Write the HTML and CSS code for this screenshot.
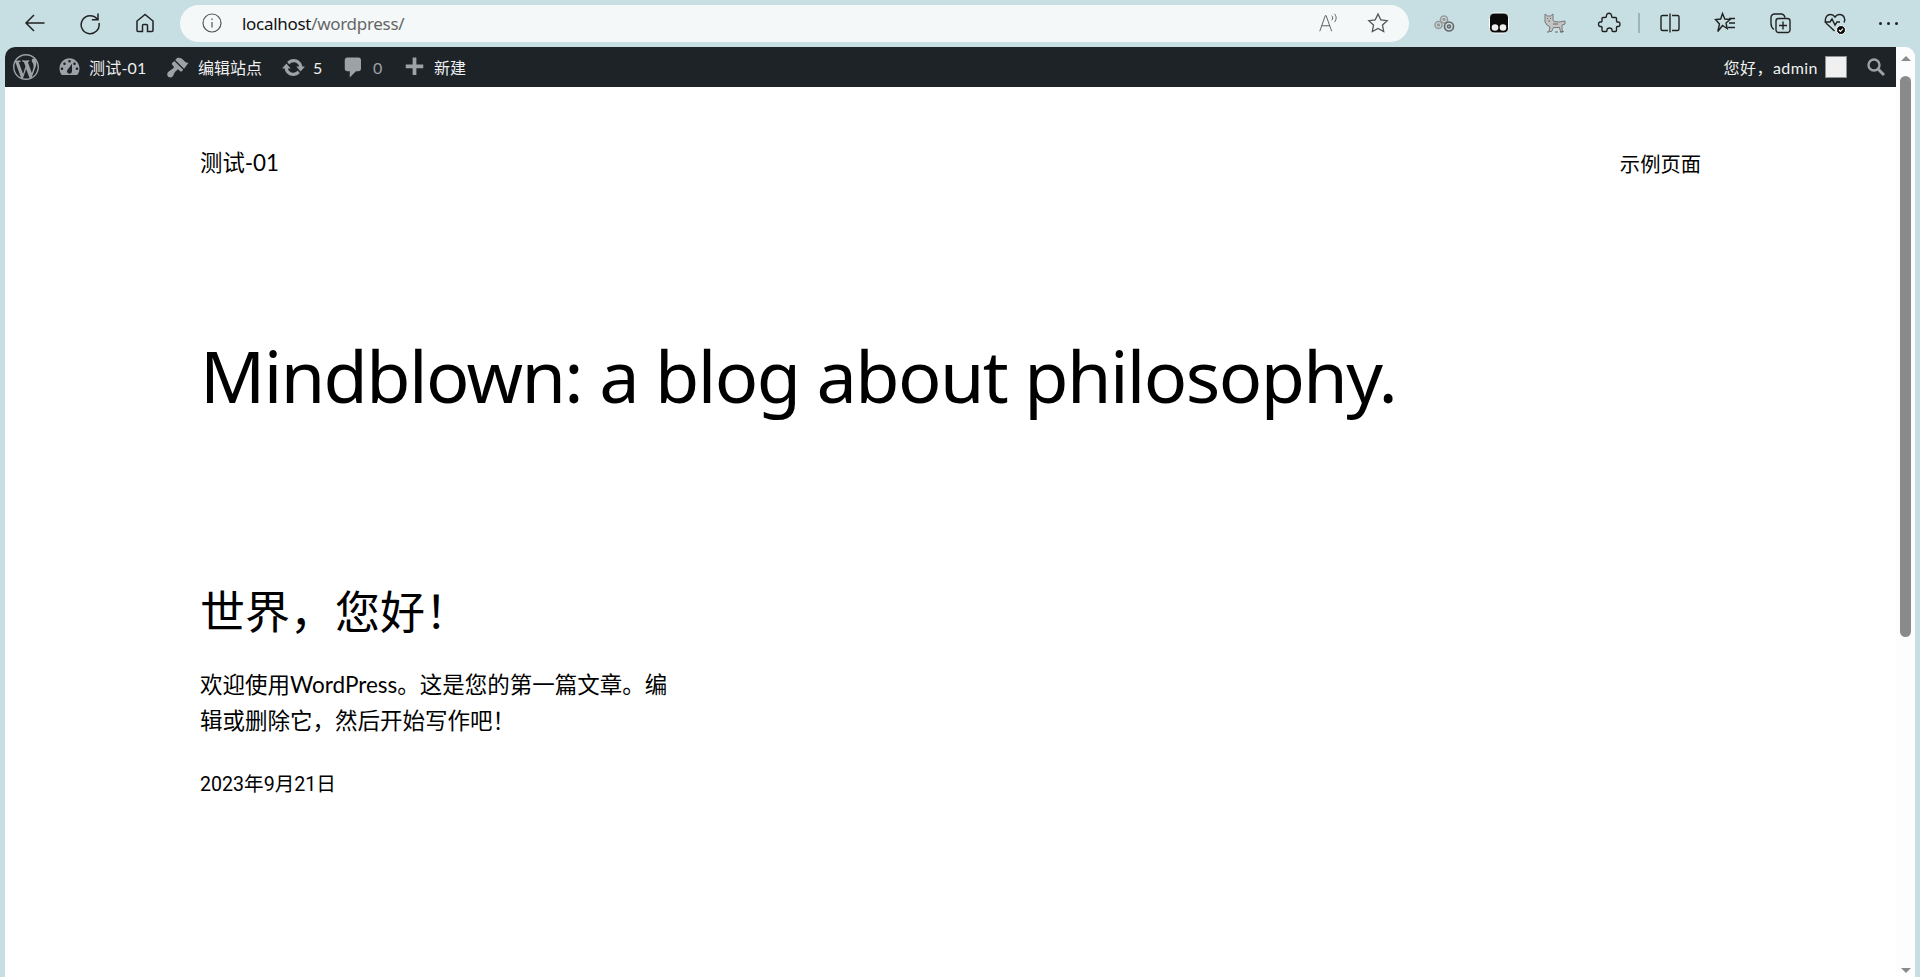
FILE: index.html
```html
<!DOCTYPE html>
<html lang="zh-CN">
<head>
<meta charset="utf-8">
<title>测试-01</title>
<link rel="stylesheet" href="styles.css">
</head>
<body>
<div class="chrome">
  <div class="nav">
    <svg class="ic nav-back" viewBox="0 0 24 24"><path d="M21.500 12H3M11 4l-8 8 8 8"/></svg>
    <svg class="ic nav-reload" viewBox="0 0 24 24"><path d="M19.500 8.500A9 9 0 1 0 21 12M20 2.500v6.200h-6.200"/></svg>
    <svg class="ic nav-home" viewBox="0 0 24 24"><path d="M12 3.500 4 10v9.500a1 1 0 0 0 1 1h4.500v-6a1 1 0 0 1 1-1h3a1 1 0 0 1 1 1v6H19a1 1 0 0 0 1-1V10z"/></svg>
  </div>
  <div class="address">
    <svg class="ic-info" viewBox="0 0 20 20"><circle cx="10" cy="10" r="9"/><path d="M10 9v5.500M10 5.500v1.500"/></svg>
    <div class="url">localhost<span class="url-path">/wordpress/</span></div>
    <svg class="ic-small read" viewBox="0 0 24 24"><path d="M3 21 9 4h1l6 17M5 15h9M16 4c1.500 1.500 1.500 3.500 0 5M19 2c2.500 2.500 2.500 6.500 0 9"/></svg>
    <svg class="ic-small" viewBox="0 0 24 24"><path d="m12 3 2.800 5.900 6.400.8-4.700 4.400 1.200 6.400-5.700-3.100-5.700 3.100 1.200-6.400-4.700-4.400 6.400-.8z"/></svg>
  </div>
  <div class="tools">
    <svg class="tool" viewBox="0 0 24 24"><g class="t-grey"><circle cx="6.500" cy="14" r="3.500"/><circle cx="12" cy="8.500" r="3.500"/><circle cx="12" cy="8.500" r="1" /><circle cx="6.500" cy="14" r="1"/></g><circle cx="17" cy="15.500" r="4.500" class="t-dark"/><circle cx="17" cy="15.500" r="1.500" class="t-dark"/></svg>
    <svg class="tool" viewBox="0 0 24 24"><rect x="2.500" y="2" width="19" height="20" rx="4.500" class="t-black"/><circle cx="8" cy="16.500" r="3.300" class="t-white"/><circle cx="16" cy="16.500" r="3.300" class="t-white"/></svg>
    <svg class="tool" viewBox="0 0 24 24"><path class="t-cat" d="M3 3l2.500 2h3L11 3v6l1 1.500 5 .5 6-1v3l-3 1v5l1.500 1.500h-3l-1-4h-6l-2 4H7l1-4.500-3-2-2-3z"/><path class="t-catline" d="M5 7.500h1M8 7.500h1M6 10h2M11 13h5M5 21h2M13 21h3M18 21h3"/></svg>
    <svg class="tool" viewBox="0 0 24 24"><path class="t-line" d="M9.500 5c-.5-3.700 5.500-3.700 5 0 0 .8.500 1.500 1.500 1.500h2.500c.8 0 1 .6 1 1V10c0 .8.700 1.200 1.300 1 2.900-.8 2.900 5.300 0 4.500-.6-.200-1.300.200-1.300 1v2.500c0 .4-.2 1.500-1 1.500H16c-.8 0-1.200-.700-1-1.300.8-2.900-5.800-2.900-5 0 .2.600-.2 1.300-1 1.300H6c-.8 0-1-.6-1-1.500v-2.500c0-.800-.7-1.200-1.300-1-2.900.8-2.900-5.300 0-4.500.6.200 1.300-.2 1.300-1V7.500c0-.4.200-1 1-1h2c.8 0 1.500-.5 1.500-1.500z"/></svg>
    <span class="tool-sep"></span>
    <svg class="tool" viewBox="0 0 24 24"><path class="t-line" d="M10 4.500H4.500a1.500 1.500 0 0 0-1.500 1.500v12a1.500 1.500 0 0 0 1.500 1.500H10M14 4.500h5.500A1.500 1.500 0 0 1 21 6v12a1.500 1.500 0 0 1-1.500 1.500H14M12 2.500v19"/></svg>
    <svg class="tool" viewBox="0 0 24 24"><path class="t-line" d="m9.500 2.500 2.300 5.500 5.200.5-4 3.500 1.200 5.500-4.700-3-4.700 6 1.700-7.500-4-4.500 5.200-.5zM16 7.500h6M16 12h6M15 16.500h7"/></svg>
    <svg class="tool" viewBox="0 0 24 24"><path class="t-line" d="M6 18.500c-1.500-1-3-3.500-3-6V6.500A3.500 3.500 0 0 1 6.500 3H13c2 0 3.500 1.500 4 3.500M10.500 7.500h9A2.500 2.500 0 0 1 22 10v9a2.500 2.500 0 0 1-2.500 2.500h-9A2.500 2.500 0 0 1 8 19v-9a2.500 2.500 0 0 1 2.500-2.500zM15 10.500v8M11 14.500h8"/></svg>
    <svg class="tool" viewBox="0 0 24 24"><path class="t-line" d="M11.500 20 4 13C.5 9.500 3 3.500 7.500 3.500c2 0 3.500 1 4.500 2.500 1-1.500 2.500-2.500 4.500-2.500 4.500 0 6.500 5 4.500 8M1.500 11H7l2-3 3 6 2-3h3"/><circle cx="18" cy="19" r="4.500" class="t-black"/><path class="t-check" d="m16 19 1.500 1.500 2.500-2.800"/></svg>
    <div class="more"><i></i><i></i><i></i></div>
  </div>
</div>

<div class="window">
  <div class="viewport">
    <div class="adminbar">
      <div class="ab-left">
        <div class="ab-item ab-wp">
          <svg class="wp" viewBox="0 0 20 20"><path d="M20 10c0-5.510-4.490-10-10-10C4.480 0 0 4.490 0 10c0 5.520 4.480 10 10 10 5.510 0 10-4.480 10-10zM7.780 15.370L4.370 6.220c.55-.02 1.170-.08 1.170-.08.5-.06.44-1.130-.06-1.110 0 0-1.450.11-2.370.11-.18 0-.37 0-.58-.01C4.120 2.690 6.870 1.110 10 1.110c2.330 0 4.450.87 6.050 2.340-.68-.11-1.650.39-1.650 1.580 0 .74.45 1.360.9 2.100.35.61.55 1.360.55 2.460 0 1.490-1.400 5-1.400 5l-3.030-8.370c.54-.02.82-.17.82-.17.5-.05.44-1.250-.06-1.220 0 0-1.440.12-2.380.12-.87 0-2.330-.12-2.330-.12-.5-.03-.56 1.200-.06 1.220l.92.08 1.260 3.410zM17.410 10c.24-.64.74-1.870.43-4.250.7 1.290 1.050 2.710 1.050 4.250 0 3.290-1.730 6.240-4.400 7.780.97-2.590 1.940-5.200 2.920-7.780zM6.100 18.090C3.120 16.640 1.110 13.530 1.110 10c0-1.300.23-2.480.72-3.590C3.250 10.300 4.670 14.200 6.100 18.090zm4.030-6.630l2.580 6.980c-.86.29-1.760.45-2.710.45-.79 0-1.570-.11-2.290-.33.81-2.380 1.620-4.740 2.420-7.100z"/></svg>
        </div>
        <div class="ab-item ab-site">
          <svg class="ab-ic" viewBox="0 0 20 20"><path fill-rule="evenodd" d="M3.760 16h12.480c1.100-1.430 1.760-3.210 1.760-5.150C18 6.040 14.410 2.500 10 2.500S2 6.040 2 10.850c0 1.940.66 3.720 1.760 5.150zM10 4c.55 0 1 .45 1 1s-.45 1-1 1-1-.45-1-1 .45-1 1-1zM6 6c.55 0 1 .45 1 1s-.45 1-1 1-1-.45-1-1 .45-1 1-1zm8 0c.55 0 1 .45 1 1s-.45 1-1 1-1-.45-1-1 .45-1 1-1zm-5.370 5.550L12 7v6c0 1.100-.9 2-2 2s-2-.9-2-2c0-.57.25-1.080.63-1.450zM4 10c.55 0 1 .45 1 1s-.45 1-1 1-1-.45-1-1 .45-1 1-1zm12 0c.55 0 1 .45 1 1s-.45 1-1 1-1-.45-1-1 .45-1 1-1z"/></svg>
          <span class="ab-sitename">测试-01</span>
        </div>
        <div class="ab-item ab-edit">
          <svg class="ab-ic" viewBox="0 0 20 20"><path d="M14.480 11.060 7.410 3.990l1.500-1.500c.5-.56 2.300-.47 3.510.32 1.210.8 1.430 1.280 2.410 2.090 1.180 1 2.240 1.540 3.170 1.260l-3.520 4.900zm-.71.71L6.700 4.700 4.930 6.470c-.39.39-.39 1.020 0 1.410l1.060 1.060c.39.39.39 1.030 0 1.420-.6.6-1.430 1.110-2.210 1.690-.35.26-.7.53-1.010.84C1.430 13.710 1 14.650 1 15.500c0 .52.16 1.040.47 1.470.31.42.75.75 1.280.91.52.16 1.080.14 1.590-.06.51-.2.95-.57 1.250-1.040.45-.69.7-1.470 1.030-2.220.18-.41.4-.81.69-1.150.47-.55 1.030-1.010 1.560-1.510.39-.39 1.020-.39 1.410 0l1.060 1.060c.39.39 1.020.39 1.410 0z"/></svg>
          <span>编辑站点</span>
        </div>
        <div class="ab-item ab-upd">
          <svg class="ab-ic" viewBox="0 0 20 20"><path d="M10.200 3.280c3.530 0 6.430 2.610 6.920 6h2.080l-3.500 4-3.500-4h2.320c-.45-1.970-2.210-3.440-4.320-3.440-1.450 0-2.730.71-3.540 1.780L4.950 5.660C6.230 4.200 8.110 3.280 10.200 3.280zm-.4 13.440c-3.520 0-6.430-2.610-6.920-6H.8l3.500-4c1.170 1.330 2.330 2.670 3.500 4H5.480c.45 1.970 2.210 3.440 4.320 3.440 1.450 0 2.730-.71 3.540-1.770l1.710 1.950c-1.280 1.460-3.150 2.380-5.250 2.380z"/></svg>
          <span>5</span>
        </div>
        <div class="ab-item ab-com">
          <svg class="ab-ic" viewBox="0 0 20 20"><path d="M5 2h9c1.100 0 2 .9 2 2v7c0 1.100-.9 2-2 2h-2l-5 5v-5H5c-1.100 0-2-.9-2-2V4c0-1.100.9-2 2-2z"/></svg>
          <span class="muted">0</span>
        </div>
        <div class="ab-item ab-new">
          <svg class="ab-ic" viewBox="0 0 20 20"><path d="M17 7.500v3h-5.500V16h-3v-5.500H3v-3h5.500V2h3v5.500z"/></svg>
          <span>新建</span>
        </div>
      </div>
      <div class="ab-right">
        <span class="howdy">您好，admin</span>
        <span class="avatar"></span>
        <svg class="ab-search" viewBox="0 0 20 20"><circle cx="8" cy="8" r="5.500"/><path class="search-handle" d="m12 12 6 6"/></svg>
      </div>
    </div>
    <div class="page">
      <header class="site-head">
        <div class="site-title">测试-01</div>
        <nav class="site-nav">示例页面</nav>
      </header>
      <h1 class="tagline">Mindblown: a blog about philosophy.</h1>
      <article class="post">
        <h2 class="post-title">世界，您好！</h2>
        <p class="post-text">欢迎使用WordPress。这是您的第一篇文章。编辑或删除它，然后开始写作吧！</p>
        <div class="post-date">2023年9月21日</div>
      </article>
    </div>
  </div>
  <div class="scrollbar">
    <span class="arrow-up"></span>
    <span class="thumb"></span>
    <span class="arrow-down"></span>
  </div>
</div>
</body>
</html>
```
FILE: styles.css
```css
* { box-sizing: border-box; }
html, body { margin: 0; height: 100%; overflow: hidden; }
body {
  background: #c7dfe3;
  font-family: "Lato", "Noto Sans CJK SC", sans-serif;
  display: flex;
  flex-direction: column;
  color: #000;
}
.chrome { height: 47px; display: flex; align-items: center; flex: none; padding-bottom: 1px; }
.nav { width: 180px; display: flex; align-items: center; flex: none; padding-left: 23px; gap: 31px; }
.ic { width: 24px; height: 24px; fill: none; stroke: #222; stroke-width: 1.500; flex: none; }
.address {
  width: 1229px; height: 37px; background: #f4f8f9; border-radius: 18.500px;
  display: flex; align-items: center; padding-left: 22px; flex: none;
}
.ic-info { width: 20px; height: 20px; fill: none; stroke: #555; stroke-width: 1.200; flex: none; }
.url { margin-left: 20px; font-family: "Noto Sans", sans-serif; font-size: 17px; letter-spacing: -.3px; color: #111; flex: 1; }
.url-path { color: #666; }
.ic-small { width: 24px; height: 24px; fill: none; stroke: #555; stroke-width: 1.300; margin-right: 19px; flex: none; }
.ic-small.read { width: 22px; height: 22px; margin-right: 27px; stroke-width: 1; }
.tools { flex: 1; display: flex; align-items: center; padding-left: 23px; }
.tool { width: 24px; height: 24px; fill: none; margin-right: 31px; flex: none; }
.t-line { stroke: #222; stroke-width: 1.400; fill: none; }
.t-grey { fill: none; stroke: #999; stroke-width: 1.600; }
.t-dark { fill: none; stroke: #666; stroke-width: 1.600; }
.t-black { fill: #0a0a0a; stroke: #fff; stroke-width: 1; }
.t-white { fill: #eee; stroke: none; }
.t-check { fill: none; stroke: #fff; stroke-width: 1.200; }
.t-cat { fill: #c4c4c4; stroke: #777; stroke-width: 1; }
.t-catline { fill: none; stroke: #666; stroke-width: 1.200; }
.tool-sep { width: 2px; height: 20px; background: #9fb4b8; margin: 0 18px 0 -14px; flex: none; }
.more { display: flex; gap: 5px; margin-left: 1px; }
.more i { width: 3px; height: 3px; border-radius: 50%; background: #222; }

.window { flex: 1; min-height: 0; display: flex; margin: 0 5px; background: #fff; border-radius: 10px 10px 0 0; overflow: hidden; }
.viewport { flex: 1; min-width: 0; display: flex; flex-direction: column; }
.adminbar {
  height: 40px; background: #1d2327; display: flex; justify-content: space-between; align-items: center;
  color: #f0f0f1; font-size: 16px; flex: none;
}
.ab-left, .ab-right { display: flex; align-items: center; height: 100%; }
.ab-item { display: flex; align-items: center; height: 100%; }
.ab-wp { padding-left: 8px; width: 52px; }
.wp { width: 26px; height: 26px; fill: #9ca2a7; }
.ab-ic { width: 25px; height: 25px; margin-right: 7px; fill: #9ca2a7; flex: none; }
.ab-sitename { letter-spacing: .2px; }
.ab-site { width: 109px; }
.ab-edit { width: 115px; }
.ab-upd { width: 60px; }
.ab-com { width: 61px; }
.muted { color: #9ca2a7; }
.howdy { margin-right: 7px; letter-spacing: .45px; }
.avatar { width: 22px; height: 22px; background: #f0f0f1; border: 1px solid #8c8f94; }
.ab-search { width: 20px; height: 20px; fill: none; stroke: #9ca2a7; stroke-width: 2.400; margin: 0 10px 0 19px; }
.search-handle { stroke-width: 3; }

.page { flex: 1; padding: 0 195px; }
.site-head { display: flex; justify-content: space-between; align-items: center; padding-top: 62px; line-height: 30px; height: 92px; }
.site-title { font-size: 22.400px; margin-bottom: 2px; }
.site-nav { font-size: 20.300px; }
.tagline { font-family: "Noto Sans", sans-serif; font-weight: 400; font-size: 72px; letter-spacing: -1.600px; line-height: 96px; margin: 148px 0 0; white-space: nowrap; }
.post { width: 475px; margin-top: 158px; }
.post-title { font-weight: 400; font-size: 45px; line-height: 62px; margin: 0; }
.post-text { font-size: 22.500px; line-height: 36px; margin: 24px 0 0; }
.post-date { font-family: "Roboto", "Noto Sans CJK SC", sans-serif; font-size: 19.600px; line-height: 26px; margin-top: 33px; }

.scrollbar { width: 19px; flex: none; background: #fdfdfd; display: flex; flex-direction: column; align-items: center; padding: 9px 0 4px; }
.arrow-up { width: 0; height: 0; border-left: 5px solid transparent; border-right: 5px solid transparent; border-bottom: 5px solid #8a8a8a; flex: none; }
.thumb { width: 11px; height: 561px; background: #8a8a8a; border-radius: 6px; margin-top: 15px; flex: none; }
.arrow-down { width: 0; height: 0; border-left: 5px solid transparent; border-right: 5px solid transparent; border-top: 5px solid #8a8a8a; margin-top: auto; flex: none; }
```
